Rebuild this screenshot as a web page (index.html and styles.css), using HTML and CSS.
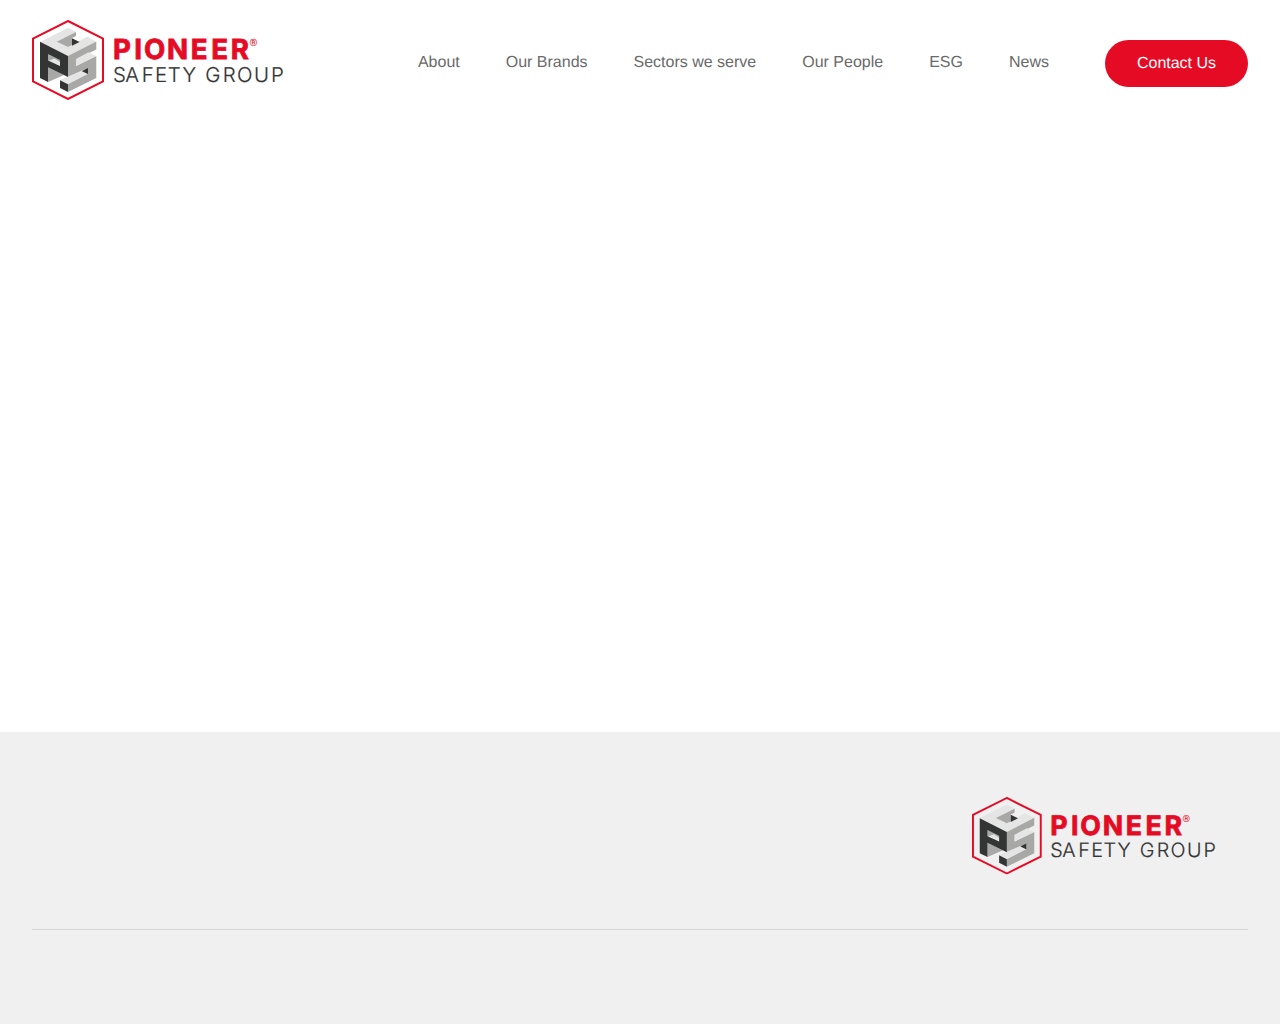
FILE: index.html
```html
<!DOCTYPE html>
<html lang="en">
<head>
<meta charset="utf-8">
<title>Pioneer Safety Group</title>
<link rel="stylesheet" href="styles.css">
</head>
<body>
<svg class="defs" aria-hidden="true">
  <symbol id="logo" viewBox="32 20 252 80">
    <path class="hex" d="M68 21 103 38.5V81.5L68 99 33 81.5V38.5Z"/>
    <path class="light" d="M40 42 68 27.7 76 31.7V34L57 41.7 68 47 87 36.7 96.2 41.5 68 56.5Z"/>
    <path class="grey" d="M56.7 41.7 76 32V36L72 38V45L68 47Z"/>
    <path class="dark" d="M72 38.3 79.5 42 72 45.8Z"/>
    <path class="grey" d="M68 56 96.3 41.5V49.5L76 59.5V66L96.3 56V78L68 92Z"/>
    <path class="light" d="M76 59 88.5 52.3 96.3 56 76 66Z"/>
    <path class="light" d="M60 80 82 70.5 88 74 68 84.3Z"/>
    <path class="dark" d="M82 71.2 88 68V74Z"/>
    <path class="dark" d="M60 80.2 68 84.3V92L60 88Z"/>
    <path class="grey" d="M48 67 64 75 48 82Z"/>
    <path class="light" d="M48 61 55 57.5 60 60V66Z"/>
    <path class="grey" d="M48 53.5 60 59.5V62L54.5 58.5 48 61Z"/>
    <path class="dark" fill-rule="evenodd" d="M40 41.8 68 56V77L48 67.3V82L40 78ZM48 54V60.5L60 66V60Z"/>
    <text class="name" y="59.1" x="112.9 134.2 143.9 167.1 190.7 211.2 230.8">PIONEER</text>
    <text class="mark" x="249.4" y="45.8">®</text>
    <text class="sub" y="82" x="112.9 125.3 141.7 155.1 167.8 182.4 200 205.3 222.8 237 254 271">SAFETY GROUP</text>
  </symbol>
</svg>
<header class="header">
  <a class="brand"><svg class="logo"><use href="#logo"/></svg></a>
  <nav class="nav">
    <a>About</a><a>Our Brands</a><a>Sectors we serve</a><a>Our People</a><a>ESG</a><a>News</a>
  </nav>
  <a class="button">Contact Us</a>
</header>
<main class="main"></main>
<footer class="footer">
  <div class="footer-top"><svg class="footer-logo"><use href="#logo"/></svg></div>
</footer>
</body>
</html>
```
FILE: styles.css
```css
* { box-sizing: border-box; }
body {
  margin: 0;
  min-height: 1024px;
  display: flex;
  flex-direction: column;
  background: #fff;
  color: #6a6a6a;
  font: 16px/24px "Liberation Sans", Arial, sans-serif;
  text-rendering: geometricPrecision;
}
.defs { display: none; }
.header {
  height: 120px;
  padding: 20px 32px;
  display: flex;
  align-items: center;
}
.brand { margin-right: auto; }
.logo { display: block; width: 252px; height: 80px; }
.nav { display: flex; gap: 46px; margin-top: 6px; white-space: nowrap; }
.button {
  margin: 7px 0 0 56px;
  width: 143px;
  height: 47px;
  border-radius: 24px;
  background: #e50b24;
  color: #fff;
  line-height: 48px;
  text-align: center;
}
.main { height: 612px; }
.footer {
  flex: 1;
  padding: 0 32px;
  background: #f0f0f0;
}
.footer-top {
  height: 198px;
  padding: 65px 32px 0 0;
  display: flex;
  justify-content: flex-end;
  border-bottom: 1px solid #d5d5d5;
}
.footer-logo { display: block; width: 244px; height: 77.5px; }
.hex { fill: none; stroke: #e50b24; stroke-width: 2; }
.light { fill: #e5e5e5; }
.grey { fill: #a8a8a7; }
.dark { fill: #333434; }
.name { font: 700 27.6px Inter, sans-serif; fill: #e50b24; stroke: #e50b24; stroke-width: .8; }
.mark { font: 400 10px Roboto, sans-serif; fill: #e50b24; }
.sub { font: 300 20.4px Inter, sans-serif; fill: #333434; stroke: #333434; stroke-width: .2; }
```
